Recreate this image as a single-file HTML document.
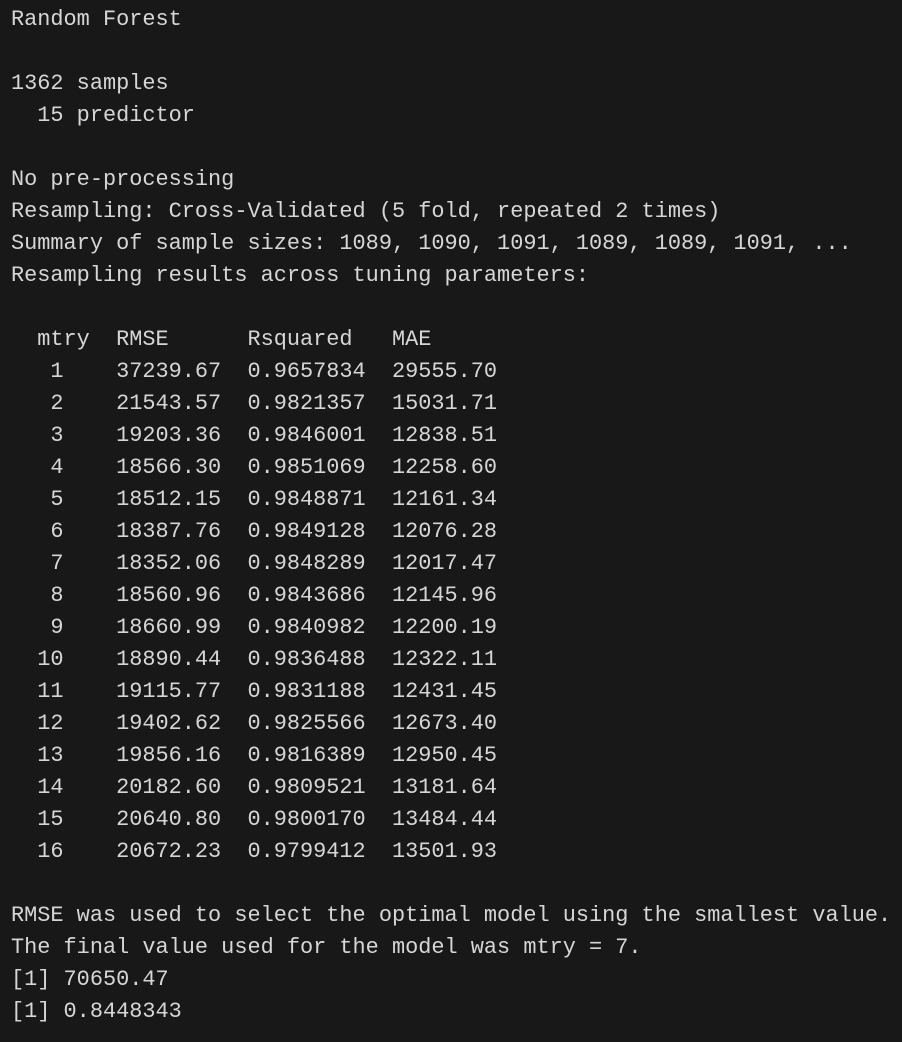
<!DOCTYPE html>
<html><head><meta charset="utf-8"><style>
html,body{margin:0;background:#181818;}
body{width:902px;height:1042px;overflow:hidden;}
pre{margin:0;padding:4px 0 0 11px;font-family:"Liberation Mono","DejaVu Sans Mono",monospace;font-size:21.9px;line-height:32px;color:#d6d6d6;}
</style></head><body><pre>Random Forest

1362 samples
  15 predictor

No pre-processing
Resampling: Cross-Validated (5 fold, repeated 2 times)
Summary of sample sizes: 1089, 1090, 1091, 1089, 1089, 1091, ...
Resampling results across tuning parameters:

  mtry  RMSE      Rsquared   MAE
   1    37239.67  0.9657834  29555.70
   2    21543.57  0.9821357  15031.71
   3    19203.36  0.9846001  12838.51
   4    18566.30  0.9851069  12258.60
   5    18512.15  0.9848871  12161.34
   6    18387.76  0.9849128  12076.28
   7    18352.06  0.9848289  12017.47
   8    18560.96  0.9843686  12145.96
   9    18660.99  0.9840982  12200.19
  10    18890.44  0.9836488  12322.11
  11    19115.77  0.9831188  12431.45
  12    19402.62  0.9825566  12673.40
  13    19856.16  0.9816389  12950.45
  14    20182.60  0.9809521  13181.64
  15    20640.80  0.9800170  13484.44
  16    20672.23  0.9799412  13501.93

RMSE was used to select the optimal model using the smallest value.
The final value used for the model was mtry = 7.
[1] 70650.47
[1] 0.8448343</pre></body></html>
